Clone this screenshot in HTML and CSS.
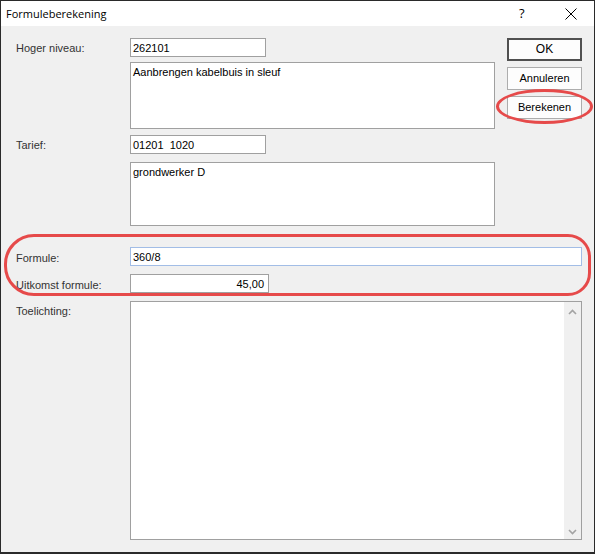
FILE: index.html
```html
<!DOCTYPE html>
<html>
<head>
<meta charset="utf-8">
<link rel="stylesheet" href="styles.css">
</head>
<body>
<div class="window">
  <div class="titlebar">
    <span class="title">Formuleberekening</span>
    <span class="help">?</span>
    <span class="close"><svg width="12" height="12" viewBox="0 0 12 12"><path d="M0.5 0.5 L11.5 11.5 M11.5 0.5 L0.5 11.5" stroke="#000" stroke-width="1" fill="none"/></svg></span>
  </div>
  <div class="content">
    <div class="top">
      <div class="fields">
        <div class="row">
          <span class="label">Hoger niveau:</span>
          <div class="input w136">262101</div>
        </div>
        <div class="row gap5">
          <span class="label"></span>
          <div class="textarea h67">Aanbrengen kabelbuis in sleuf</div>
        </div>
        <div class="row gap6">
          <span class="label">Tarief:</span>
          <div class="input w136">01201&nbsp; 1020</div>
        </div>
        <div class="row gap8">
          <span class="label"></span>
          <div class="textarea h64">grondwerker D</div>
        </div>
      </div>
      <div class="buttons">
        <div class="btn default">OK</div>
        <div class="btn">Annuleren</div>
        <div class="btn">Berekenen</div>
      </div>
    </div>
    <div class="row gap21">
      <span class="label lower">Formule:</span>
      <div class="input wide focus">360/8</div>
    </div>
    <div class="row gap8">
      <span class="label lower">Uitkomst formule:</span>
      <div class="input w139 right">45,00</div>
    </div>
    <div class="row gap8">
      <span class="label">Toelichting:</span>
      <div class="memo">
        <div class="memo-text"></div>
        <div class="scrollbar">
          <svg width="9" height="6" viewBox="0 0 9 6"><path d="M1 5 L4.5 1.5 L8 5" stroke="#a3a3a3" stroke-width="1.6" fill="none"/></svg>
          <svg width="9" height="6" viewBox="0 0 9 6"><path d="M1 1 L4.5 4.5 L8 1" stroke="#a3a3a3" stroke-width="1.6" fill="none"/></svg>
        </div>
      </div>
    </div>
    <div class="mark mark-formule"></div>
    <div class="mark mark-btn"></div>
  </div>
</div>
</body>
</html>
```

FILE: styles.css
```css
* { box-sizing: border-box; }
html, body { margin: 0; padding: 0; }
body {
  width: 595px;
  height: 554px;
  overflow: hidden;
  background: #f0f0f0;
  font-family: "Liberation Sans", Arial, sans-serif;
}
.window {
  width: 595px;
  height: 554px;
  border: 1px solid #2a2a2a;
  border-bottom-width: 2px;
  background: #f0f0f0;
  display: flex;
  flex-direction: column;
}
.titlebar {
  height: 25px;
  background: #fff;
  display: flex;
  align-items: center;
  padding-left: 5px;
  flex-shrink: 0;
}
.title {
  font-family: "Open Sans", "Noto Sans", sans-serif;
  font-size: 11px;
  color: #000;
  flex: 1;
  padding-bottom: 1px;
}
.help {
  font-family: "Open Sans", "Noto Sans", sans-serif;
  font-size: 13px;
  color: #000;
  width: 12px;
  margin-right: 34px;
  padding-bottom: 1px;
}
.close {
  display: flex;
  width: 12px;
  height: 12px;
  margin-right: 17px;
}
.content {
  position: relative;
  flex: 1;
  padding: 12px 12px 0 15px;
  display: flex;
  flex-direction: column;
  font-size: 11px;
  color: #000;
}
.top {
  display: flex;
  align-items: flex-start;
}
.fields {
  display: flex;
  flex-direction: column;
}
.row {
  display: flex;
  align-items: flex-start;
}
.gap5 { margin-top: 5px; }
.gap6 { margin-top: 6px; }
.gap8 { margin-top: 8px; }
.gap21 { margin-top: 21px; }
.label {
  width: 114px;
  flex-shrink: 0;
  line-height: 13px;
  padding-top: 4px;
  color: #333;
}
.label.lower { padding-top: 5px; }
.input {
  height: 19px;
  border: 1px solid #a0a0a0;
  background: #fff;
  line-height: 13px;
  padding: 3px 2px 1px;
  white-space: nowrap;
}
.w136 { width: 136px; }
.w139 { width: 139px; }
.wide { width: 452px; }
.focus { border-color: #a2bde6; }
.right { text-align: right; padding-right: 4px; }
.textarea {
  width: 365px;
  border: 1px solid #a0a0a0;
  background: #fff;
  line-height: 13px;
  padding: 3px 2px;
}
.h67 { height: 67px; }
.h64 { height: 64px; }
.buttons {
  margin-left: 12px;
  width: 75px;
  display: flex;
  flex-direction: column;
  gap: 6px;
}
.btn {
  height: 23px;
  border: 1px solid #adadad;
  background: #fdfdfd;
  display: flex;
  align-items: center;
  justify-content: center;
  color: #000;
  padding-bottom: 1px;
}
.btn.default {
  border: 2px solid #505050;
  font-size: 12px;
}
.memo {
  width: 452px;
  height: 239px;
  border: 1px solid #a0a0a0;
  background: #fff;
  display: flex;
}
.memo-text { flex: 1; }
.scrollbar {
  width: 17px;
  background: #f0f0f0;
  display: flex;
  flex-direction: column;
  justify-content: space-between;
  align-items: center;
  padding: 7px 0 4px;
}
.scrollbar svg { display: block; }
.mark {
  position: absolute;
  border: 3px solid #e64a4a;
  pointer-events: none;
}
.mark-formule {
  left: 3px;
  top: 208px;
  width: 587px;
  height: 62px;
  border-radius: 30px 23px 23px 30px / 30px 23px 23px 30px;
}
.mark-btn {
  left: 495px;
  top: 63px;
  width: 97px;
  height: 35px;
  border-radius: 50%;
}
```
